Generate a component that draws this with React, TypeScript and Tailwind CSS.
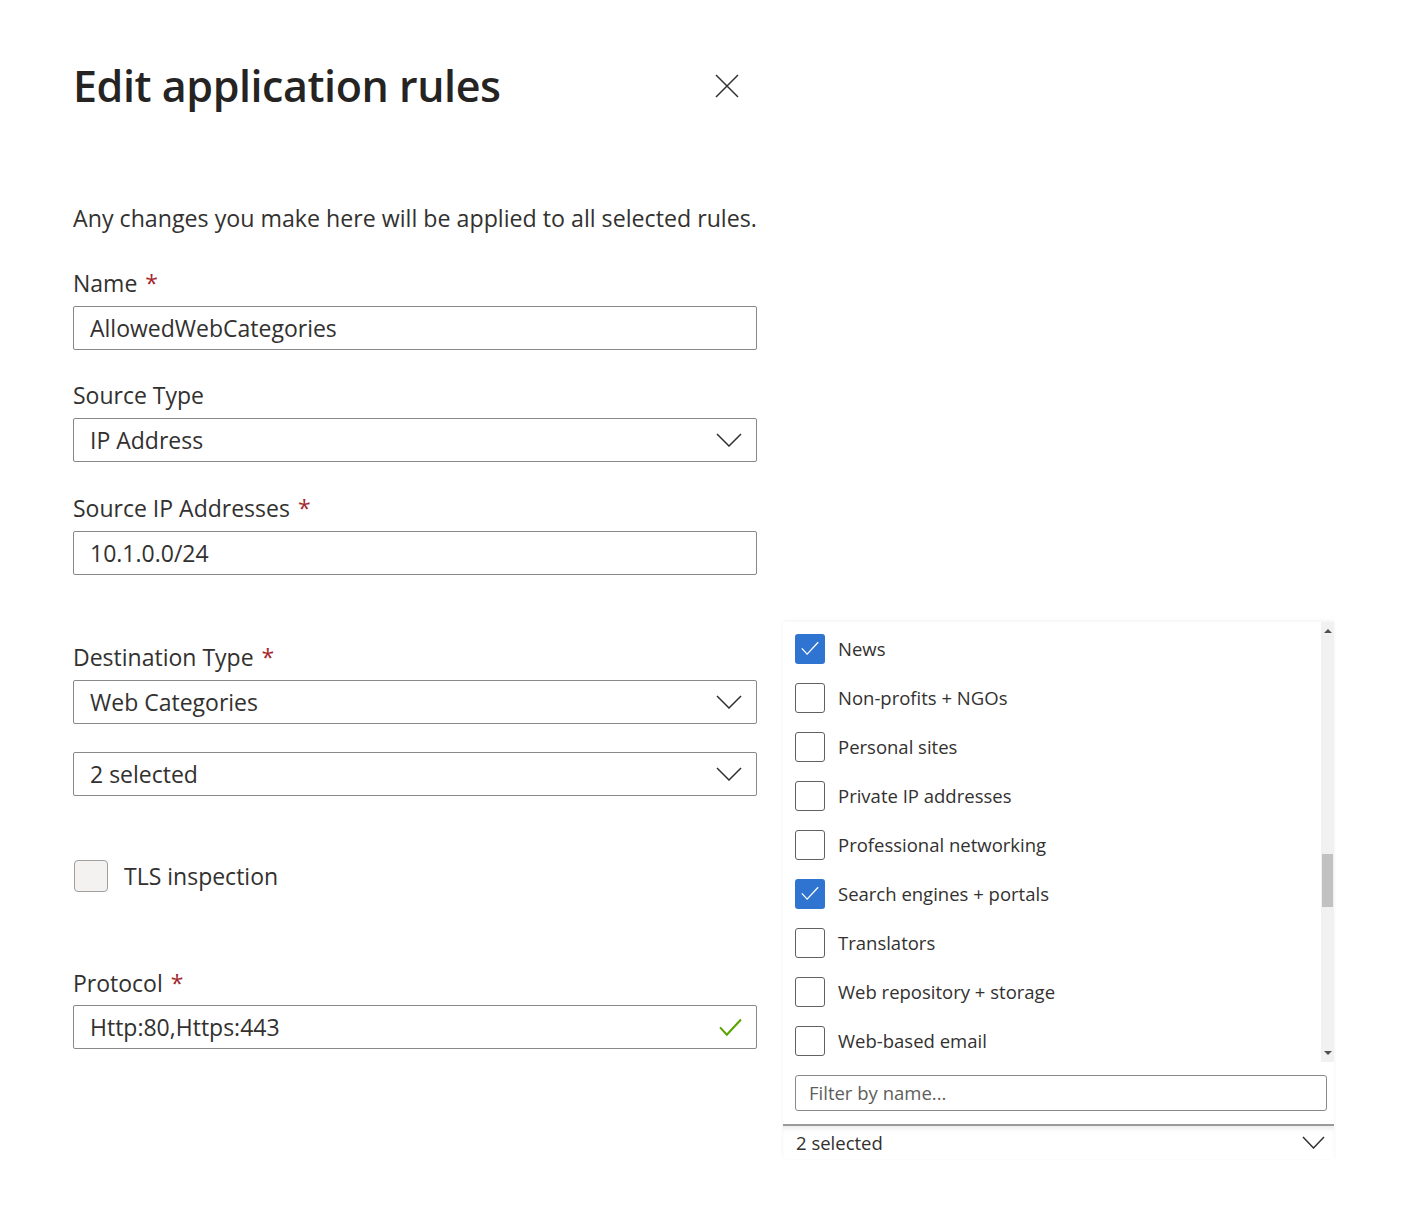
const CATEGORIES = [
  { label: "News", checked: true },
  { label: "Non-profits + NGOs", checked: false },
  { label: "Personal sites", checked: false },
  { label: "Private IP addresses", checked: false },
  { label: "Professional networking", checked: false },
  { label: "Search engines + portals", checked: true },
  { label: "Translators", checked: false },
  { label: "Web repository + storage", checked: false },
  { label: "Web-based email", checked: false },
];

function Chevron({ w = 26, h = 14 }: { w?: number; h?: number }) {
  return (
    <svg width={w} height={h} viewBox={`0 0 ${w} ${h}`} fill="none" className="text-[#323130]">
      <polyline points={`1,1 ${w / 2},${h - 1} ${w - 1},1`} stroke="currentColor" strokeWidth="1.5" />
    </svg>
  );
}

function Tick({ size = 22, color = "#fff", width = 1.6 }: { size?: number; color?: string; width?: number }) {
  return (
    <svg width={size} height={size * 0.8} viewBox="0 0 22 17.6" fill="none">
      <polyline points="1,9 7.5,16 21,1.5" stroke={color} strokeWidth={width} />
    </svg>
  );
}

function Label({ text, required = false, className = "" }: { text: string; required?: boolean; className?: string }) {
  return (
    <p className={`h-8 leading-8 text-[23px] text-[#323130] ${className}`}>
      {text}
      {required && <span className="ml-2 text-[#a4262c]">*</span>}
    </p>
  );
}

function Box({ value, chevron = false, valid = false, className = "" }: { value: string; chevron?: boolean; valid?: boolean; className?: string }) {
  return (
    <div
      className={`flex h-[44px] items-center justify-between rounded-[2px] border border-[#8a8886] pl-4 pr-[14px] text-[23px] text-[#323130] ${className}`}
    >
      <span>{value}</span>
      {chevron && <Chevron />}
      {valid && <Tick size={23} color="#57a300" width={2} />}
    </div>
  );
}

function CategoryDropdown() {
  return (
    <div className="absolute left-[783px] top-[622px] w-[551px] bg-white shadow-[0_-1px_4px_rgba(0,0,0,0.06)]">
      <div className="flex h-[440px]">
        <ul className="flex-1 overflow-hidden pt-[2px]">
          {CATEGORIES.map((c) => (
            <li key={c.label} className="flex h-[49px] items-center pl-3">
              {c.checked ? (
                <span className="flex h-[30px] w-[30px] items-center justify-center rounded-[3px] bg-[#2f74d0]">
                  <Tick size={18} />
                </span>
              ) : (
                <span className="h-[30px] w-[30px] rounded-[3px] border-[1.5px] border-[#616161] bg-white" />
              )}
              <span className="ml-[13px] text-[18.5px] text-[#323130]">{c.label}</span>
            </li>
          ))}
        </ul>
        <div className="relative w-[13px] bg-[#f1f1f1]">
          <span className="absolute left-[3px] top-[7px] h-0 w-0 border-x-[4px] border-b-[4px] border-x-transparent border-b-[#505050]" />
          <span className="absolute left-[1px] top-[232px] h-[53px] w-[11px] bg-[#c1c1c1]" />
          <span className="absolute bottom-[7px] left-[3px] h-0 w-0 border-x-[4px] border-t-[4px] border-x-transparent border-t-[#505050]" />
        </div>
      </div>
      <div className="px-3 pt-[13px] pb-[13px]">
        <div className="flex h-[36px] w-[532px] items-center rounded-[3px] border border-[#8a8886] pl-[13px] text-[18.5px] text-[#605e5c]">
          Filter by name...
        </div>
      </div>
      <div className="flex h-[35px] items-center justify-between border-t-2 border-[#9a9a9a] pl-[13px] pr-[9px] text-[18.5px] text-[#323130] shadow-[inset_0_5px_6px_-4px_rgba(0,0,0,0.12)]">
        <span>2 selected</span>
        <Chevron w={23} h={13} />
      </div>
    </div>
  );
}

export default function App() {
  return (
    <div className="relative min-h-[1206px] w-full bg-white pt-[59px] font-['Open_Sans',sans-serif]">
      <div className="w-[757px] pl-[73px]">
        <div className="flex h-[53px] items-center justify-between">
          <h1 className="text-[43px] font-semibold leading-[53px] tracking-[-0.01em] text-[#252423]">
            Edit application rules
          </h1>
          <svg width="24" height="24" viewBox="0 0 24 24" className="mr-[18px] text-[#323130]">
            <path d="M1 1 L23 23 M23 1 L1 23" stroke="currentColor" strokeWidth="1.5" />
          </svg>
        </div>

        <p className="mt-[90px] h-8 whitespace-nowrap leading-8 text-[23.2px] text-[#323130]">
          Any changes you make here will be applied to all selected rules.
        </p>

        <Label text="Name" required className="mt-[33px]" />
        <Box value="AllowedWebCategories" className="mt-[7px]" />

        <Label text="Source Type" className="mt-[29px]" />
        <Box value="IP Address" chevron className="mt-[7px]" />

        <Label text="Source IP Addresses" required className="mt-[30px]" />
        <Box value="10.1.0.0/24" className="mt-[7px]" />

        <Label text="Destination Type" required className="mt-[66px]" />
        <Box value="Web Categories" chevron className="mt-[7px]" />

        <Box value="2 selected" chevron className="mt-[28px]" />

        <div className="mt-[64px] flex h-8 items-center">
          <span className="ml-[1px] h-[32px] w-[34px] rounded-[4px] border border-[#a19f9d] bg-[#f3f2f1]" />
          <span className="ml-4 text-[23px] text-[#323130]">TLS inspection</span>
        </div>

        <Label text="Protocol" required className="mt-[75px]" />
        <Box value="Http:80,Https:443" valid className="mt-[6px]" />
      </div>

      <CategoryDropdown />
    </div>
  );
}
